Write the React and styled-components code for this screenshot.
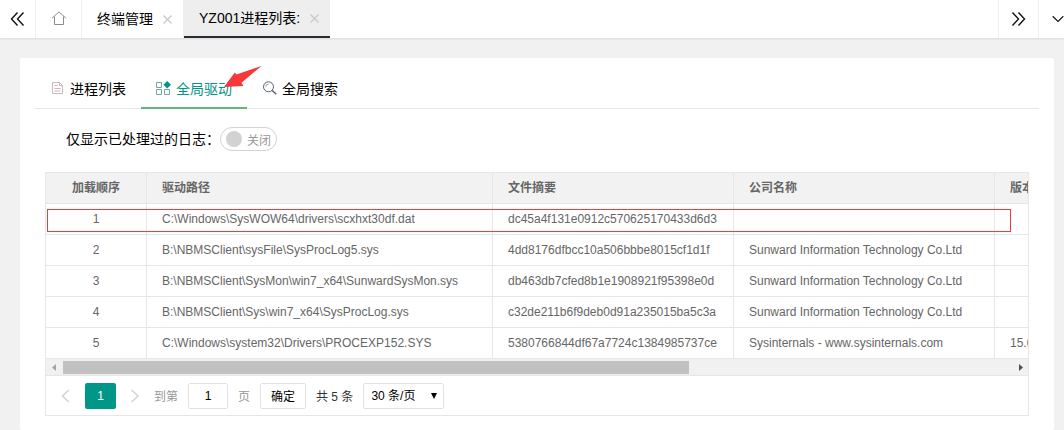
import React, { useState } from 'react';
import styled, { createGlobalStyle } from 'styled-components';

const GlobalStyle = createGlobalStyle`
  * {
    box-sizing: border-box;
  }

  body {
    margin: 0;
    background-color: #f1f1f1;
    color: #000;
    font-family: 'Liberation Sans', 'Noto Sans CJK SC', sans-serif;
    font-size: 14px;
  }

  button, input, select {
    font-family: inherit;
    margin: 0;
    padding: 0;
  }
`;

// Top bar with the opened pages
const TopBar = styled.nav`
  display: flex;
  height: 38px;
  background-color: #fff;
  box-shadow: 0 1px 2px rgba(0, 0, 0, 0.1);
`;

const BarButton = styled.button`
  display: flex;
  align-items: center;
  justify-content: center;
  width: ${(props) => props.$width}px;
  flex-shrink: 0;
  border: none;
  border-${(props) => props.$side || 'right'}: 1px solid #eee;
  background: none;
  cursor: pointer;
`;

const EdgeButton = styled(BarButton)`
  justify-content: flex-start;
  padding-left: 13px;
  overflow: hidden;
`;

const PageTabs = styled.div`
  display: flex;
  flex: 1;
`;

const PageTab = styled.div`
  display: flex;
  align-items: center;
  gap: 10px;
  padding: 0 11px 0 15px;
  border-right: ${(props) => (props.$active ? 'none' : '1px solid #eee')};
  border-bottom: ${(props) => (props.$active ? '2px solid #292b34' : 'none')};
  background-color: ${(props) => (props.$active ? '#eee' : '#fff')};
`;

const PageLink = styled.a`
  color: #000;
  line-height: 20px;
  text-decoration: none;
  white-space: nowrap;
`;

const CloseButton = styled.button`
  display: flex;
  border: none;
  background: none;
  cursor: pointer;
`;

// Main card
const Card = styled.main`
  margin: 20px 10px 0 20px;
  padding: 10px 15px 14px;
  border-radius: 2px;
  background-color: #fff;
`;

const TabList = styled.div`
  display: flex;
  height: 41px;
  border-bottom: 1px solid #e6e6e6;
`;

const Tab = styled.button`
  position: relative;
  display: flex;
  align-items: center;
  gap: 4px;
  height: 41px;
  padding: 2px 15px 0;
  border: none;
  border-bottom: 2px solid ${(props) => (props.$active ? '#5fb878' : 'transparent')};
  background: none;
  color: ${(props) => (props.$active ? '#009688' : '#000')};
  font-size: 14px;
  line-height: 20px;
  white-space: nowrap;
  cursor: pointer;
`;

const Arrow = styled.svg`
  position: absolute;
  left: 82px;
  top: -3px;
  z-index: 1;
`;

const FilterRow = styled.label`
  display: flex;
  align-items: center;
  width: fit-content;
  margin: 18px 0 21px 31px;
  white-space: nowrap;
`;

const FilterText = styled.span`
  line-height: 20px;
`;

const SwitchInput = styled.input`
  appearance: none;
  width: 0;
  height: 0;
`;

const Switch = styled.span`
  display: flex;
  flex-direction: ${(props) => (props.$on ? 'row-reverse' : 'row')};
  align-items: center;
  justify-content: space-between;
  width: 57px;
  height: 24px;
  padding: 0 5px;
  border: 1px solid ${(props) => (props.$on ? '#5fb878' : '#d2d2d2')};
  border-radius: 12px;
  background-color: ${(props) => (props.$on ? '#5fb878' : '#fff')};
  color: ${(props) => (props.$on ? '#fff' : '#999')};
  font-size: 12px;
  cursor: pointer;
`;

const Knob = styled.span`
  width: 16px;
  height: 16px;
  border-radius: 8px;
  background-color: ${(props) => (props.$on ? '#fff' : '#d2d2d2')};
`;

// Table
const TableView = styled.section`
  position: relative;
  margin: 0 10px;
  border: 1px solid #e6e6e6;
`;

const TableClip = styled.div`
  overflow: hidden;
`;

const Table = styled.table`
  width: 1490px;
  table-layout: fixed;
  border-collapse: separate;
  border-spacing: 0;
  color: #666;
  font-size: 12px;
  line-height: 20px;
`;

const Col = styled.col`
  width: ${(props) => props.$width}px;
`;

const Th = styled.th`
  height: 31px;
  padding: 0 15px;
  border-right: 1px solid #e6e6e6;
  border-bottom: 1px solid #e6e6e6;
  background-color: #f2f2f2;
  text-align: ${(props) => props.$align || 'left'};
  font-weight: bold;
`;

const Td = styled.td`
  height: 31px;
  padding: 0 15px;
  border-right: 1px solid #e6e6e6;
  border-bottom: 1px solid #e6e6e6;
  text-align: ${(props) => props.$align || 'left'};
  white-space: nowrap;
`;

const Highlight = styled.div`
  position: absolute;
  top: 36px;
  left: 1px;
  right: 17px;
  height: 23px;
  border: 1px solid #f23c3c;
  pointer-events: none;
`;

const ScrollBar = styled.div`
  display: flex;
  align-items: center;
  height: 16px;
  background-color: #f1f1f1;
`;

const ScrollArrow = styled.svg`
  width: 17px;
  height: 16px;
  flex-shrink: 0;
`;

const ScrollTrack = styled.div`
  flex: 1;
  padding-top: 1px;
`;

const ScrollThumb = styled.div`
  width: 66%;
  height: 13px;
  background-color: #c1c1c1;
`;

// Pagination
const Pager = styled.div`
  display: flex;
  align-items: center;
  height: 40px;
  padding: 0 7px;
  border-top: 1px solid #e6e6e6;
  font-size: 12px;
  white-space: nowrap;
`;

const PagerArrow = styled.button`
  display: flex;
  align-items: center;
  justify-content: ${(props) => props.$align || 'center'};
  width: ${(props) => props.$width}px;
  height: 26px;
  border: none;
  background: none;
`;

const CurrentPage = styled.button`
  width: 31px;
  height: 26px;
  border: none;
  border-radius: 2px;
  background-color: #009688;
  color: #fff;
  font-size: 12px;
`;

const SkipLabel = styled.label`
  display: flex;
  align-items: center;
  gap: 10px;
  color: #999;
`;

const PageInput = styled.input`
  width: 40px;
  height: 26px;
  border: 1px solid #e2e2e2;
  border-radius: 2px;
  background-color: #fff;
  color: #000;
  font-size: 12px;
  text-align: center;
`;

const ConfirmButton = styled.button`
  width: 46px;
  height: 26px;
  margin: 0 10px;
  border: 1px solid #e2e2e2;
  border-radius: 2px;
  background-color: #fff;
  color: #000;
  font-size: 12px;
  cursor: pointer;
`;

const Total = styled.span`
  color: #333;
`;

const LimitBox = styled.div`
  display: grid;
  align-items: center;
  margin-left: 10px;
`;

const LimitSelect = styled.select`
  grid-area: 1 / 1;
  appearance: none;
  width: 81px;
  height: 26px;
  padding-left: 7px;
  border: 1px solid #e2e2e2;
  border-radius: 2px;
  background-color: #fff;
  color: #000;
  font-size: 12px;
`;

const LimitArrow = styled.svg`
  grid-area: 1 / 1;
  justify-self: end;
  margin-right: 7px;
  pointer-events: none;
`;

const CloseIcon = () => (
  <svg width="9" height="9" viewBox="0 0 9 9" fill="none" stroke="#c6c6c6" strokeWidth="1.1">
    <path d="M0.5 0.5l8 8M8.5 0.5l-8 8" />
  </svg>
);

const FileIcon = () => (
  <svg width="16" height="16" viewBox="0 0 16 16" fill="none" stroke="#c4bcc0" strokeWidth="1">
    <path d="M2.5 1.5h7l3 3v8h-10z" />
    <path d="M9.5 1.5v3h3" />
    <path d="M4.5 4.5h3M4.5 7.5h6M4.5 10h6" stroke="#d3b4aa" />
  </svg>
);

const DriverIcon = () => (
  <svg width="16" height="16" viewBox="0 0 16 16" fill="none" stroke="#6fa69e" strokeWidth="1">
    <path d="M0.5 1.5h5v5h-5zM0.5 8.5h5v5h-5zM8.5 8.5h5v5h-5z" />
    <path d="M11.2 0l3.8 3.8-3.8 3.8-3.8-3.8z" fill="#009688" stroke="none" />
  </svg>
);

const SearchIcon = () => (
  <svg width="16" height="16" viewBox="0 0 16 16" fill="none" stroke="#56606e">
    <circle cx="6.5" cy="5.8" r="5" strokeWidth="1" />
    <path d="M3.8 5.8a2.7 2.7 0 0 1 2.7-2.7" strokeWidth="0.6" />
    <path d="M10.2 9.5l4 3.8" strokeWidth="1.5" />
  </svg>
);

const rows = [
  { id: 1, path: 'C:\\Windows\\SysWOW64\\drivers\\scxhxt30df.dat', hash: 'dc45a4f131e0912c570625170433d6d3', company: '', version: '' },
  { id: 2, path: 'B:\\NBMSClient\\sysFile\\SysProcLog5.sys', hash: '4dd8176dfbcc10a506bbbe8015cf1d1f', company: 'Sunward Information Technology Co.Ltd', version: '' },
  { id: 3, path: 'B:\\NBMSClient\\SysMon\\win7_x64\\SunwardSysMon.sys', hash: 'db463db7cfed8b1e1908921f95398e0d', company: 'Sunward Information Technology Co.Ltd', version: '' },
  { id: 4, path: 'B:\\NBMSClient\\Sys\\win7_x64\\SysProcLog.sys', hash: 'c32de211b6f9deb0d91a235015ba5c3a', company: 'Sunward Information Technology Co.Ltd', version: '' },
  { id: 5, path: 'C:\\Windows\\system32\\Drivers\\PROCEXP152.SYS', hash: '5380766844df67a7724c1384985737ce', company: 'Sysinternals - www.sysinternals.com', version: '15.0' },
];

const App = () => {
  const [handledOnly, setHandledOnly] = useState(false);
  const [page, setPage] = useState('1');

  return (
    <>
      <GlobalStyle />
      <TopBar>
        <BarButton $width={36} aria-label="向左">
          <svg width="16" height="16" viewBox="0 0 16 16" fill="none" stroke="#111" strokeWidth="1.4">
            <path d="M7.5 1.5L1.5 8l6 6.5M13.5 1.5L7.5 8l6 6.5" />
          </svg>
        </BarButton>
        <BarButton $width={46} aria-label="首页">
          <svg width="16" height="16" viewBox="0 0 16 16" fill="none" stroke="#8d8d8d" strokeWidth="1">
            <path d="M1 7.2L8 0.9l7 6.3M3.5 5.5v8h9v-8" />
          </svg>
        </BarButton>
        <PageTabs>
          <PageTab>
            <PageLink href="#terminals">终端管理</PageLink>
            <CloseButton aria-label="关闭终端管理"><CloseIcon /></CloseButton>
          </PageTab>
          <PageTab $active>
            <PageLink href="#processes">YZ001进程列表:</PageLink>
            <CloseButton aria-label="关闭进程列表"><CloseIcon /></CloseButton>
          </PageTab>
        </PageTabs>
        <BarButton $width={40} $side="left" aria-label="向右">
          <svg width="16" height="16" viewBox="0 0 16 16" fill="none" stroke="#111" strokeWidth="1.4">
            <path d="M1.5 1.5l6 6.5-6 6.5M7.5 1.5l6 6.5-6 6.5" />
          </svg>
        </BarButton>
        <EdgeButton $width={26} $side="left" aria-label="更多">
          <svg width="14" height="8" viewBox="0 0 14 8" fill="none" stroke="#111" strokeWidth="1.3">
            <path d="M0.8 0.8L7 6.8l6.2-6" />
          </svg>
        </EdgeButton>
      </TopBar>

      <Card>
        <TabList role="tablist">
          <Tab role="tab">
            <FileIcon />
            进程列表
          </Tab>
          <Tab role="tab" aria-selected="true" $active>
            <DriverIcon />
            全局驱动
            <Arrow width="40" height="24" viewBox="0 0 40 24" fill="#f5383a">
              <path d="M38.5 1L13.5 9.5 11.8 7.5 1 22l19.5-1-2-3.2z" />
            </Arrow>
          </Tab>
          <Tab role="tab">
            <SearchIcon />
            全局搜索
          </Tab>
        </TabList>

        <FilterRow>
          <FilterText>仅显示已处理过的日志：</FilterText>
          <SwitchInput
            type="checkbox"
            checked={handledOnly}
            onChange={(e) => setHandledOnly(e.target.checked)}
          />
          <Switch $on={handledOnly}>
            <Knob $on={handledOnly} />
            {handledOnly ? '开启' : '关闭'}
          </Switch>
        </FilterRow>

        <TableView>
          <TableClip>
            <Table>
              <colgroup>
                <Col $width={101} />
                <Col $width={346} />
                <Col $width={241} />
                <Col $width={261} />
                <col />
              </colgroup>
              <thead>
                <tr>
                  <Th $align="center">加载顺序</Th>
                  <Th>驱动路径</Th>
                  <Th>文件摘要</Th>
                  <Th>公司名称</Th>
                  <Th>版本</Th>
                </tr>
              </thead>
              <tbody>
                {rows.map((row) => (
                  <tr key={row.id}>
                    <Td $align="center">{row.id}</Td>
                    <Td>{row.path}</Td>
                    <Td>{row.hash}</Td>
                    <Td>{row.company}</Td>
                    <Td>{row.version}</Td>
                  </tr>
                ))}
              </tbody>
            </Table>
          </TableClip>
          <Highlight />
          <ScrollBar>
            <ScrollArrow viewBox="0 0 17 16" fill="#a3a3a3">
              <path d="M10 5v7L6 8.5z" />
            </ScrollArrow>
            <ScrollTrack>
              <ScrollThumb />
            </ScrollTrack>
            <ScrollArrow viewBox="0 0 17 16" fill="#505050">
              <path d="M8 5v7l4-3.5z" />
            </ScrollArrow>
          </ScrollBar>

          <Pager>
            <PagerArrow $width={32} $align="flex-start" aria-label="上一页">
              <svg width="24" height="14" viewBox="0 0 24 14" fill="none" stroke="#d2d2d2" strokeWidth="1.5">
                <path d="M16 1L9.5 7l6.5 6" />
              </svg>
            </PagerArrow>
            <CurrentPage>1</CurrentPage>
            <PagerArrow $width={38} aria-label="下一页">
              <svg width="10" height="14" viewBox="0 0 10 14" fill="none" stroke="#d2d2d2" strokeWidth="1.5">
                <path d="M1.5 1L8 7l-6.5 6" />
              </svg>
            </PagerArrow>
            <SkipLabel>
              到第
              <PageInput type="text" value={page} onChange={(e) => setPage(e.target.value)} />
              页
            </SkipLabel>
            <ConfirmButton>确定</ConfirmButton>
            <Total>共 5 条</Total>
            <LimitBox>
              <LimitSelect aria-label="每页条数" defaultValue="30">
                <option value="30">30 条/页</option>
                <option value="60">60 条/页</option>
              </LimitSelect>
              <LimitArrow width="6" height="6" viewBox="0 0 6 6" fill="#000">
                <path d="M0 0h6L3 6z" />
              </LimitArrow>
            </LimitBox>
          </Pager>
        </TableView>
      </Card>
    </>
  );
};

export default App;
